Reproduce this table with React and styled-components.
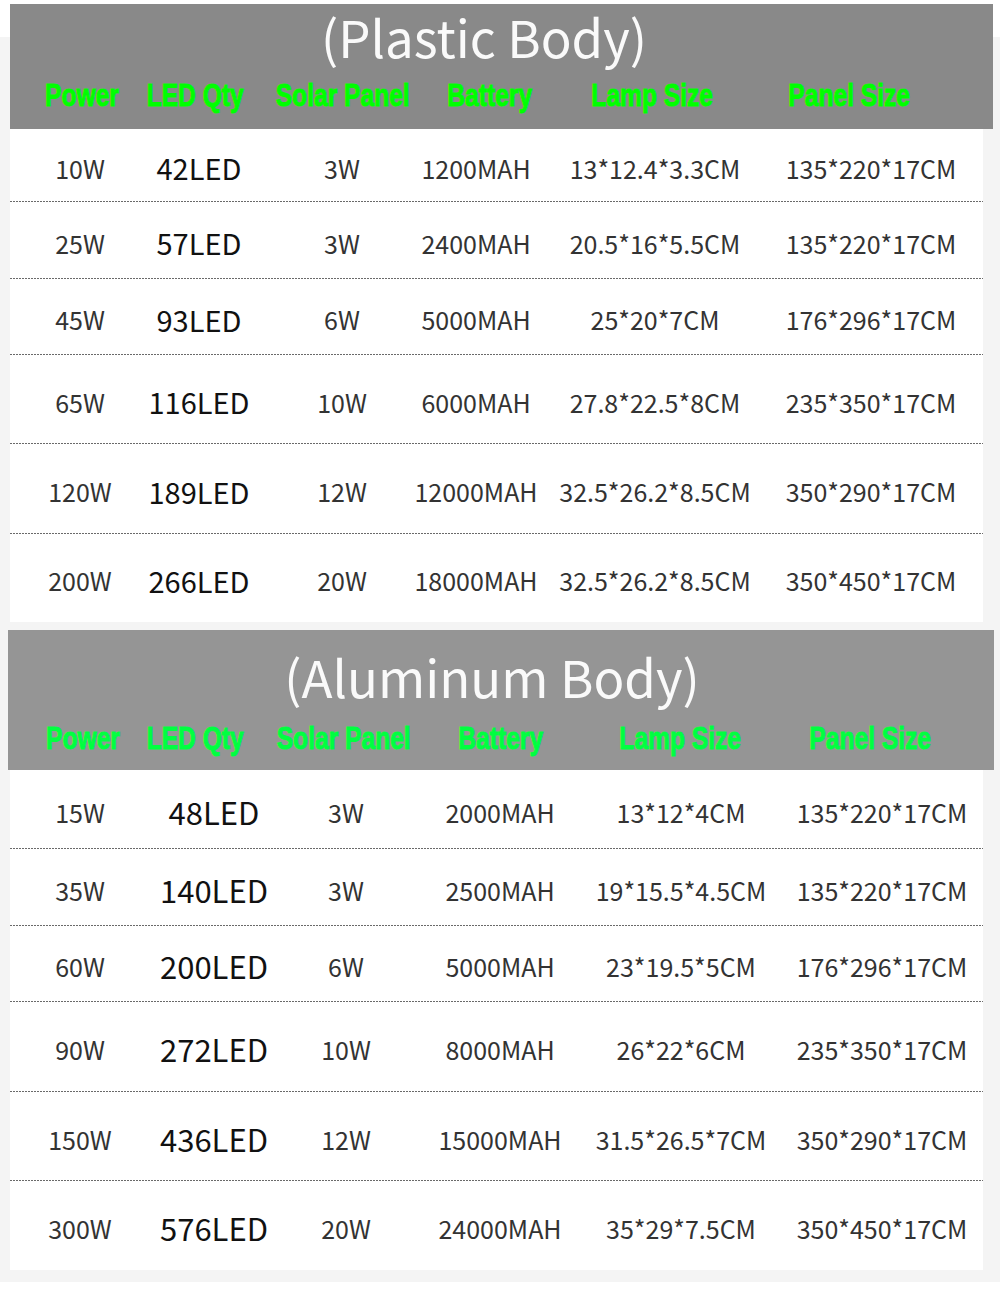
import React from "react";
import styled, { createGlobalStyle } from "styled-components";

const GlobalStyle = createGlobalStyle`
  html, body {
    margin: 0;
    padding: 0;
    background: #fff;
  }
  * {
    box-sizing: border-box;
  }
`;

// grid tracks whose middles sit on the given column centres
const tracks = (centers) => {
  const d = centers.slice(1).map((c, i) => c - centers[i]);
  const a = [0];
  d.forEach((g, i) => a.push(g - a[i]));
  const even = a.filter((_, i) => i % 2 === 0);
  const odd = a.filter((_, i) => i % 2 === 1);
  const x = (Math.min(...odd) - Math.min(...even)) / 2;
  const r = a.map((v, i) => (i % 2 === 0 ? v + x : v - x));
  return {
    offset: centers[0] - r[0],
    cols: r.map((v) => `${2 * v}px`).join(" "),
  };
};

const LABELS = ["Power", "LED Qty", "Solar Panel", "Battery", "Lamp Size", "Panel Size"];

const TABLES = [
  {
    title: "(Plastic Body)",
    headBg: "#898989",
    green: "#00ff00",
    headLeft: 10,
    headWidth: 983,
    headHeight: 125,
    titleTop: 2,
    titleShift: 35,
    labelGap: 12,
    headCenters: [72, 185, 333, 480, 642, 839],
    rowCenters: [70, 189, 332, 466, 645, 861],
    ledSize: 29,
    rows: [
      { h: 73, cells: ["10W", "42LED", "3W", "1200MAH", "13*12.4*3.3CM", "135*220*17CM"] },
      { h: 77, cells: ["25W", "57LED", "3W", "2400MAH", "20.5*16*5.5CM", "135*220*17CM"] },
      { h: 76, cells: ["45W", "93LED", "6W", "5000MAH", "25*20*7CM", "176*296*17CM"] },
      { h: 89, cells: ["65W", "116LED", "10W", "6000MAH", "27.8*22.5*8CM", "235*350*17CM"] },
      { h: 90, cells: ["120W", "189LED", "12W", "12000MAH", "32.5*26.2*8.5CM", "350*290*17CM"] },
      { h: 88, cells: ["200W", "266LED", "20W", "18000MAH", "32.5*26.2*8.5CM", "350*450*17CM"] },
    ],
  },
  {
    title: "(Aluminum Body)",
    headBg: "#959595",
    green: "#00ff40",
    headLeft: 8,
    headWidth: 986,
    headHeight: 140,
    titleTop: 16,
    titleShift: 18,
    labelGap: 15,
    headCenters: [75, 187, 336, 493, 672, 862],
    rowCenters: [70, 204, 336, 490, 671, 872],
    ledSize: 31,
    rows: [
      { h: 79, cells: ["15W", "48LED", "3W", "2000MAH", "13*12*4CM", "135*220*17CM"] },
      { h: 77, cells: ["35W", "140LED", "3W", "2500MAH", "19*15.5*4.5CM", "135*220*17CM"] },
      { h: 76, cells: ["60W", "200LED", "6W", "5000MAH", "23*19.5*5CM", "176*296*17CM"] },
      { h: 90, cells: ["90W", "272LED", "10W", "8000MAH", "26*22*6CM", "235*350*17CM"] },
      { h: 89, cells: ["150W", "436LED", "12W", "15000MAH", "31.5*26.5*7CM", "350*290*17CM"] },
      { h: 89, cells: ["300W", "576LED", "20W", "24000MAH", "35*29*7.5CM", "350*450*17CM"] },
    ],
  },
];

export default function App() {
  return (
    <>
      <GlobalStyle />
      <Sheet>
        {TABLES.map((t) => {
          const head = tracks(t.headCenters);
          const body = tracks(t.rowCenters);
          return (
            <Panel key={t.title}>
              <Head
                $bg={t.headBg}
                $left={t.headLeft}
                $width={t.headWidth}
                $height={t.headHeight}
                $top={t.titleTop}
                $gap={t.labelGap}
              >
                <Title $shift={t.titleShift}>{t.title}</Title>
                <LabelRow $cols={head.cols} $offset={head.offset}>
                  {LABELS.map((l) => (
                    <Label key={l} $color={t.green}>
                      {l}
                    </Label>
                  ))}
                </LabelRow>
              </Head>
              <Body>
                {t.rows.map((r, i) => (
                  <Row
                    key={i}
                    $h={r.h}
                    $last={i === t.rows.length - 1}
                    $cols={body.cols}
                    $offset={body.offset}
                  >
                    {r.cells.map((c, j) => (
                      <Cell key={j} $led={j === 1} $ledSize={t.ledSize}>
                        {c}
                      </Cell>
                    ))}
                  </Row>
                ))}
              </Body>
            </Panel>
          );
        })}
      </Sheet>
    </>
  );
}

const Sheet = styled.div`
  width: 1000px;
  padding: 4px 0 12px;
  display: flex;
  flex-direction: column;
  gap: 8px;
  background: linear-gradient(to bottom, #fff 0 37px, #f4f4f4 37px);
  margin-bottom: 9px;
`;

const Panel = styled.section`
  display: flex;
  flex-direction: column;
`;

const Head = styled.div`
  margin-left: ${({ $left }) => $left}px;
  width: ${({ $width }) => $width}px;
  height: ${({ $height }) => $height}px;
  background: ${({ $bg }) => $bg};
  padding-top: ${({ $top }) => $top}px;
  display: flex;
  flex-direction: column;
  gap: ${({ $gap }) => $gap}px;
`;

const Title = styled.h1`
  margin: 0;
  padding-right: ${({ $shift }) => $shift}px;
  text-align: center;
  color: #fafafa;
  font-family: "Noto Sans CJK SC", "Noto Sans", sans-serif;
  font-size: 51px;
  font-weight: 400;
  line-height: 60px;
`;

const LabelRow = styled.div`
  display: grid;
  grid-template-columns: ${({ $cols }) => $cols};
  padding-left: ${({ $offset }) => $offset}px;
  justify-items: center;
`;

const Label = styled.span`
  white-space: nowrap;
  color: ${({ $color }) => $color};
  font-family: "Liberation Sans", Arial, sans-serif;
  font-size: 30px;
  font-weight: 700;
  line-height: 34px;
  -webkit-text-stroke: 1px ${({ $color }) => $color};
  transform: scale(0.82, 1.07);
`;

const Body = styled.div`
  margin-left: 10px;
  width: 973px;
  background: #fff;
  display: flex;
  flex-direction: column;
`;

const Row = styled.div`
  height: ${({ $h }) => $h}px;
  display: grid;
  grid-template-columns: ${({ $cols }) => $cols};
  padding-left: ${({ $offset }) => $offset}px;
  padding-top: 4px;
  align-items: center;
  justify-items: center;
  background: ${({ $last }) =>
    $last
      ? "none"
      : "repeating-linear-gradient(90deg, #6a6a6a 0 2px, transparent 2px 3px) left bottom / 100% 1px no-repeat"};
`;

const Cell = styled.span`
  white-space: nowrap;
  font-family: "Noto Sans CJK SC", "Noto Sans", sans-serif;
  font-size: ${({ $led, $ledSize }) => ($led ? $ledSize : 25)}px;
  color: ${({ $led }) => ($led ? "#111" : "#333")};
  line-height: 1.2;
`;
